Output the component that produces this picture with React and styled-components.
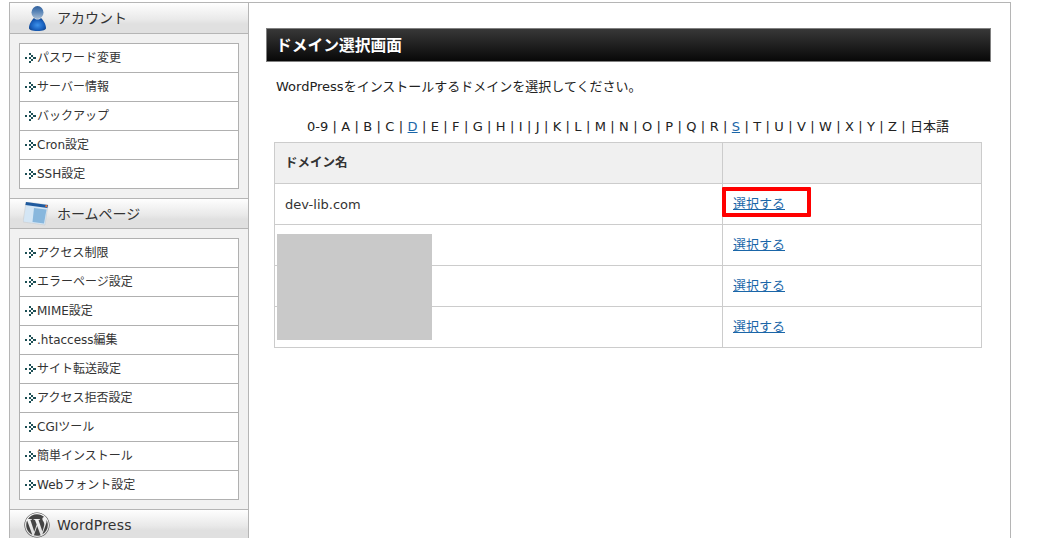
import React from "react";
import styled, { createGlobalStyle } from "styled-components";
import { FaWordpress } from "react-icons/fa";

const Global = createGlobalStyle`
  html, body { margin: 0; padding: 0; height: 538px; overflow: hidden; background: #fff; }
  body { font-family: "DejaVu Sans", Verdana, "Noto Sans CJK JP", sans-serif; font-size: 13px; color: #222; }
`;
const Shell = styled.div`
  display: flex; width: 1002px; margin: 2px 0 0 9px; box-sizing: border-box;
  border-top: 1px solid #b5b5b5; border-left: 1px solid #b5b5b5; border-right: 1px solid #b5b5b5;
`;
const Sidebar = styled.aside`
  width: 239px; flex: none; box-sizing: border-box; background: #f1f1f1; border-right: 1px solid #b5b5b5;
`;
const Head = styled.div`
  display: flex; align-items: center; box-sizing: border-box; height: 31px;
  border-top: ${p => p.$first ? "0" : "1px solid #b5b5b5"};
  border-bottom: 1px solid #b5b5b5;
  background: linear-gradient(#fefefe, #e9e9e9 55%, #e0e0e0 70%, #e0e0e0);
  padding-left: ${p => p.$pad}px; gap: ${p => p.$gap}px;
  font-size: 14px; letter-spacing: ${p => p.$track || 0}px; color: #333; line-height: 1;
`;
const Menu = styled.ul`
  list-style: none; margin: 9px; padding: 0; width: 220px; box-sizing: border-box;
  border: 1px solid #b0b0b0; background: #fff;
`;
const Item = styled.li`
  display: flex; align-items: center; box-sizing: border-box; padding: 0 0 4px 5px;
  font-size: 12px; color: #333; border-top: 1px solid #b0b0b0;
  height: 29px;
  &:first-child { border-top: 0; height: 28px; }
`;
const BulletMark = styled.svg`
  flex: none; margin-top: 4px;
`;
const Main = styled.main`
  flex: 1; box-sizing: border-box; padding: 25px 19px 0 17px; height: 540px;
`;
const Title = styled.h1`
  margin: 0; height: 34px; box-sizing: border-box; border: 1px solid #808080;
  background: linear-gradient(#383838, #080808); color: #fff;
  font-size: 15.75px; font-weight: 700; line-height: 33px; padding-left: 9px;
`;
const Lead = styled.p`
  margin: 15px 0 0 10px; line-height: 20px; color: #222; font-size: 13px;
`;
const Letters = styled.div`
  margin: 20px 0 0 8px; width: 708px; text-align: center; line-height: 20px; font-size: 13px; word-spacing: 0.24px; color: #222; white-space: nowrap;
`;
const Link = styled.a`
  color: #1a66a8; text-decoration: underline; cursor: pointer;
`;
const TableWrap = styled.div`
  position: relative; margin: 5px 0 0 8px; width: 708px;
`;
const Table = styled.table`
  border-collapse: collapse; width: 708px; table-layout: fixed; font-size: 13px;
`;
const Th = styled.th`
  background: #f0f0f0; border: 1px solid #ccc; height: 41px; padding: 0 0 4px 10px; text-align: left; font-size: 12.5px; color: #333; box-sizing: border-box;
`;
const Td = styled.td`
  position: relative; border: 1px solid #ccc; height: 41px; padding: 0 0 ${p => p.$action ? "4px" : "0"} 10px; color: #333; box-sizing: border-box;
`;
const Mask = styled.div`
  position: absolute; left: 3px; top: 92px; width: 155px; height: 106px; background: #c9c9c9;
`;
const Highlight = styled.div`
  position: absolute; left: -1px; top: 3px; width: 89px; height: 30px; box-sizing: border-box; border: 4px solid #f00; border-radius: 1px;
`;

const Bullet = () => (
  <BulletMark width="12" height="10" viewBox="0 0 12 10" shapeRendering="crispEdges" fill="#1d4f55">
    <rect x="0" y="4" width="2" height="2" />
    <rect x="4" y="0" width="2" height="2" /><rect x="6" y="2" width="2" height="2" />
    <rect x="4" y="4" width="2" height="2" /><rect x="8" y="4" width="3" height="2" />
    <rect x="6" y="6" width="2" height="2" /><rect x="4" y="8" width="2" height="2" />
  </BulletMark>
);
const PersonIcon = () => (
  <svg width="17" height="25" viewBox="0 0 17 25">
    <defs>
      <radialGradient id="pb" cx="0.5" cy="0.55" r="0.6"><stop offset="0" stopColor="#3d92ea" /><stop offset="0.6" stopColor="#1a62c0" /><stop offset="1" stopColor="#0c3f86" /></radialGradient>
      <linearGradient id="ph" x1="0" y1="0" x2="0" y2="1"><stop offset="0" stopColor="#2f5f9c" /><stop offset="0.45" stopColor="#5b86b8" /><stop offset="1" stopColor="#a9bed4" /></linearGradient>
    </defs>
    <ellipse cx="8.5" cy="6.5" rx="6" ry="6.5" fill="url(#ph)" />
    <path d="M5 12 C3 14 0 18 0 22 C0 24 3 25 8.5 25 C14 25 17 24 17 22 C17 18 14 14 12 12 C10 14 7 14 5 12Z" fill="url(#pb)" />
  </svg>
);
const WindowIcon = () => (
  <svg width="26" height="24" viewBox="0 0 26 24">
    <path d="M3 0 L25 3 L22 23 L0 20Z" fill="#d4e6f5" stroke="#c8c8c8" strokeWidth="0.5" />
    <path d="M3 0 L25 3 L24.4 6 L2.4 3Z" fill="#1f5a9e" />
    <circle cx="23.3" cy="4.2" r="1.1" fill="#e8743a" />
    <path d="M11 6 L23.5 7.5 L21 21.5 L9.5 20Z" fill="#88b7dd" />
  </svg>
);

const accountItems = ["パスワード変更", "サーバー情報", "バックアップ", "Cron設定", "SSH設定"];
const homeItems = ["アクセス制限", "エラーページ設定", "MIME設定", ".htaccess編集", "サイト転送設定", "アクセス拒否設定", "CGIツール", "簡単インストール", "Webフォント設定"];
const letters = ["0-9","A","B","C","D","E","F","G","H","I","J","K","L","M","N","O","P","Q","R","S","T","U","V","W","X","Y","Z"];
const linked = new Set(["D", "S"]);
const rows = ["dev-lib.com", "", "", ""];

const MenuList = ({ items }) => (
  <Menu>{items.map(t => <Item key={t}><Bullet />{t}</Item>)}</Menu>
);

export default function App() {
  return (
    <>
      <Global />
      <Shell>
        <Sidebar>
          <Head $first $pad={19} $gap={11}><PersonIcon />アカウント</Head>
          <MenuList items={accountItems} />
          <Head $pad={13} $gap={8}><WindowIcon />ホームページ</Head>
          <MenuList items={homeItems} />
          <Head $pad={14} $gap={7} $track={0.2}><FaWordpress size={26} color="#444" />WordPress</Head>
        </Sidebar>
        <Main>
          <Title>ドメイン選択画面</Title>
          <Lead>WordPressをインストールするドメインを選択してください。</Lead>
          <Letters>
            {letters.map(l => (
              <React.Fragment key={l}>
                {linked.has(l) ? <Link>{l}</Link> : l}{" | "}
              </React.Fragment>
            ))}
            日本語
          </Letters>
          <TableWrap>
            <Table>
              <colgroup><col style={{ width: 448 }} /><col /></colgroup>
              <thead><tr><Th>ドメイン名</Th><Th /></tr></thead>
              <tbody>
                {rows.map((d, i) => (
                  <tr key={i}>
                    <Td>{d}</Td>
                    <Td $action>
                      <Link>選択する</Link>
                      {i === 0 && <Highlight />}
                    </Td>
                  </tr>
                ))}
              </tbody>
            </Table>
            <Mask />
          </TableWrap>
        </Main>
      </Shell>
    </>
  );
}
